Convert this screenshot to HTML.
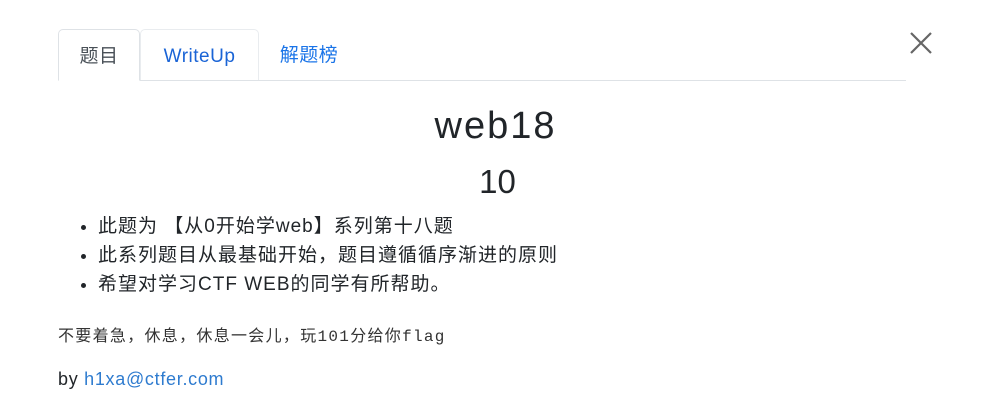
<!DOCTYPE html>
<html><head><meta charset="utf-8"><style>
body{margin:0;width:991px;height:401px;background:#fff;font-family:"Liberation Sans","Noto Sans CJK SC",sans-serif;color:#212529;position:relative;overflow:hidden}
.tabs{position:absolute;left:58px;top:29px;width:848px;height:51px;border-bottom:1px solid #dee2e6}
.tab{position:absolute;top:0;height:51px;box-sizing:border-box;font-size:19px;line-height:53px;text-align:center;border-radius:5px 5px 0 0;letter-spacing:.5px}
.t1{left:0;width:82px;border:1px solid #dee2e6;border-bottom:1px solid #fff;color:#495057;height:52px}
.t2{left:82px;width:119px;border:1px solid #e9ecef;border-bottom:none;color:#1a64d6}
.t3{left:201px;width:100px;color:#1a74e8}
.close{position:absolute;left:908px;top:30px;width:26px;height:26px}
h1{position:absolute;left:0;width:991px;top:102px;margin:0;text-align:center;font-weight:normal;font-size:38px;letter-spacing:2px;line-height:48px}
h2{position:absolute;left:0;width:995px;top:162px;margin:0;text-align:center;font-weight:normal;font-size:33px;line-height:40px}
ul{position:absolute;left:58px;top:212px;margin:0;padding-left:40px;font-size:19px;line-height:29px;letter-spacing:1px}
.p1{position:absolute;left:58px;top:322px;font-size:16px;letter-spacing:1.3px;font-family:"Liberation Mono","Noto Sans CJK SC",monospace;color:#333}
.p2{position:absolute;left:58px;top:369px;font-size:18px;letter-spacing:.7px}
.p2 a{color:#2e7bcf;text-decoration:none}
</style></head><body>
<div class="tabs">
<div class="tab t1">题目</div><div class="tab t2">WriteUp</div><div class="tab t3">解题榜</div>
</div>
<svg class="close" viewBox="0 0 26 26"><path d="M3 3L23 23M23 3L3 23" stroke="#666" stroke-width="2.2"/></svg>
<h1>web18</h1>
<h2>10</h2>
<ul><li>此题为 【从0开始学web】系列第十八题</li><li>此系列题目从最基础开始，题目遵循循序渐进的原则</li><li>希望对学习CTF WEB的同学有所帮助。</li></ul>
<div class="p1">不要着急，休息，休息一会儿，玩101分给你flag</div>
<div class="p2">by <a>h1xa@ctfer.com</a></div>
</body></html>
